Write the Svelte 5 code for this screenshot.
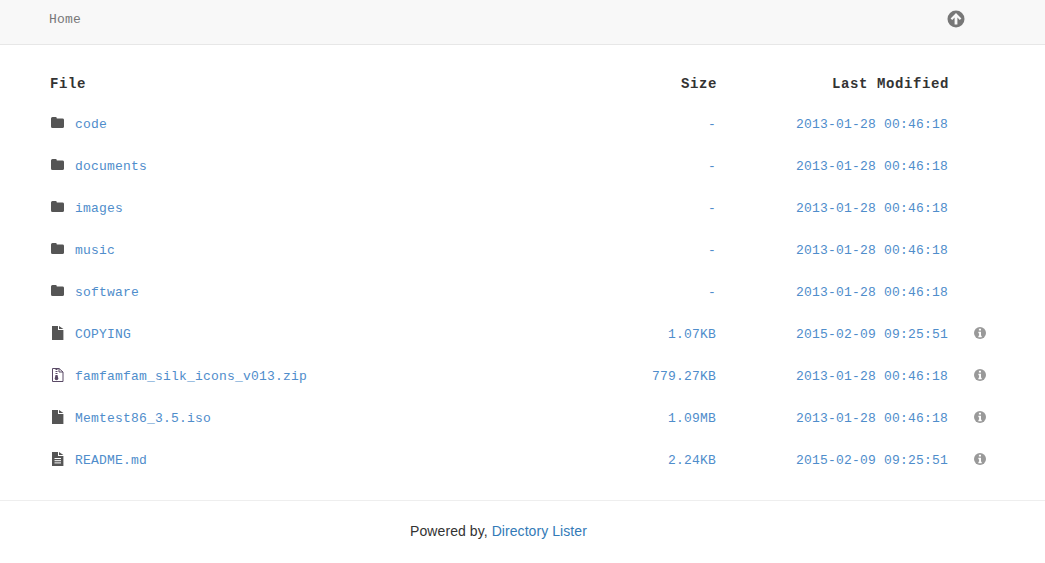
<script>
  const rows = [
    { name: 'code', icon: 'folder', size: '-', date: '2013-01-28 00:46:18' },
    { name: 'documents', icon: 'folder', size: '-', date: '2013-01-28 00:46:18' },
    { name: 'images', icon: 'folder', size: '-', date: '2013-01-28 00:46:18' },
    { name: 'music', icon: 'folder', size: '-', date: '2013-01-28 00:46:18' },
    { name: 'software', icon: 'folder', size: '-', date: '2013-01-28 00:46:18' },
    { name: 'COPYING', icon: 'file', size: '1.07KB', date: '2015-02-09 09:25:51', info: true },
    { name: 'famfamfam_silk_icons_v013.zip', icon: 'zip', size: '779.27KB', date: '2013-01-28 00:46:18', info: true },
    { name: 'Memtest86_3.5.iso', icon: 'file', size: '1.09MB', date: '2013-01-28 00:46:18', info: true },
    { name: 'README.md', icon: 'text', size: '2.24KB', date: '2015-02-09 09:25:51', info: true }
  ];
</script>

<nav class="topbar">
  <a class="home" href="#home">Home</a>
  <a class="up" href="#up" aria-label="Up one level">
    <svg width="18" height="18" viewBox="0 0 18 18">
      <circle cx="9" cy="9" r="8.5" fill="#777" />
      <path d="M9 3 14.4 8.4 12.8 10 10.4 7.6V14.4H7.6V7.6L5.2 10 3.6 8.4Z" fill="#f8f8f8" />
    </svg>
  </a>
</nav>

<main class="listing">
  <div class="row head">
    <span>File</span>
    <span class="right">Size</span>
    <span class="right">Last Modified</span>
    <span></span>
  </div>

  {#each rows as row}
    <div class="row">
      <a class="name" href="#file">
        <svg class="icon" width="14" height="16" viewBox="0 0 14 16">
          {#if row.icon === 'folder'}
            <path transform="translate(1 0) scale(.93 1)" d="M1.6 2H5a1.2 1.2 0 0 1 1.2 1.2V3.6h6.2A1.6 1.6 0 0 1 14 5.2v6.2A1.6 1.6 0 0 1 12.4 13H1.6A1.6 1.6 0 0 1 0 11.4V3.6A1.6 1.6 0 0 1 1.6 2Z" fill="#555" />
          {:else if row.icon === 'file'}
            <path d="M2 1H8V5H13.4V15H2ZM9 1 13.4 4H9Z" fill="#555" />
          {:else if row.icon === 'text'}
            <path d="M2 1H8V5H13.4V15H2ZM9 1 13.4 4H9Z" fill="#555" />
            <path d="M4.5 7.5H11M4.5 9.7H11M4.5 11.9H11" stroke="#fff" stroke-width="1" fill="none" />
          {:else}
            <path d="M2.5 1.5H9L13 5V14.5H2.5Z" fill="#fff" stroke="#5a4a66" stroke-width="1" />
            <path d="M9 1.5V5H13" fill="none" stroke="#5a4a66" stroke-width="1" />
            <path d="M5.5 2.5H7.5M5.5 4.5H7.5M5.5 6.5H7.5" stroke="#5a4a66" stroke-width="1" />
            <path d="M5.5 8H7.5L8.3 11.5A1.8 1.8 0 1 1 4.7 11.5Z" fill="#5a4a66" />
          {/if}
        </svg>
        <span>{row.name}</span>
      </a>
      <a class="right" href="#file">{row.size}</a>
      <a class="right" href="#file">{row.date}</a>
      <span class="info">
        {#if row.info}
          <svg width="12" height="12" viewBox="0 0 12 12">
            <circle cx="6" cy="6" r="6" fill="#999" />
            <path d="M4.9 1.8H7V3.5H4.9ZM4.4 4.8H7V8.8H7.7V10.2H4.4V8.8H5.1V6.2H4.4Z" fill="#fff" />
          </svg>
        {/if}
      </span>
    </div>
  {/each}
</main>

<footer class="credit">
  Powered by, <a href="#lister">Directory Lister</a>
</footer>

<style>
  :global(body) {
    background: #fff;
    color: #333;
  }

  .topbar {
    height: 38px;
    padding: 0 80px 6px 49px;
    background: #f8f8f8;
    border-bottom: 1px solid #e7e7e7;
    display: flex;
    align-items: center;
    justify-content: space-between;
    font: 13px "Liberation Mono", monospace;
    letter-spacing: 0.2px;
  }

  .home {
    color: #777;
    text-decoration: none;
  }

  .up {
    display: flex;
  }

  .listing {
    padding: 18px 38px 19px 50px;
    font: 13px "Liberation Mono", monospace;
    letter-spacing: 0.2px;
  }

  .row {
    display: grid;
    grid-template-columns: 1fr 120px 232px 59px;
    align-items: center;
    height: 42px;
  }

  .row a {
    color: #4f8dcb;
    text-decoration: none;
  }

  .head {
    box-sizing: border-box;
    height: 40px;
    padding-top: 2px;
    font-size: 14px;
    font-weight: bold;
    letter-spacing: 0.6px;
    color: #333;
  }

  .head .right {
    margin-right: -1px;
  }

  .right {
    text-align: right;
  }

  .name {
    display: flex;
    align-items: center;
    gap: 11px;
  }

  .icon {
    flex: none;
    position: relative;
    top: -1px;
  }

  .info {
    display: flex;
    padding-left: 26px;
    position: relative;
    top: -1px;
  }

  .credit {
    border-top: 1px solid #eee;
    padding: 22px 48px 0 0;
    text-align: center;
    font: 14px "Liberation Sans", Arial, sans-serif;
    letter-spacing: 0.07px;
    color: #333;
  }

  .credit a {
    color: #337ab7;
    text-decoration: none;
  }
</style>
